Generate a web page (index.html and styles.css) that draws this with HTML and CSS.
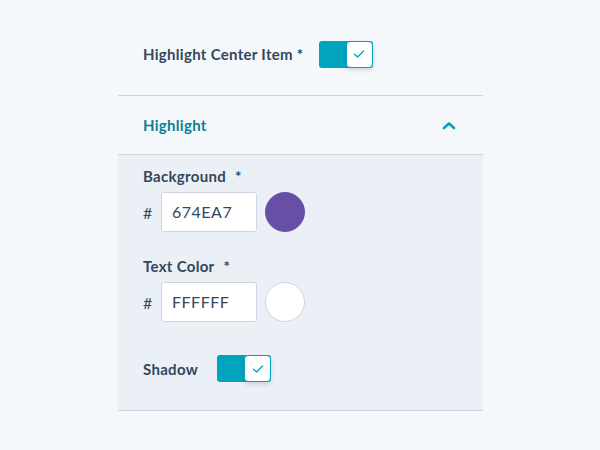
FILE: index.html
```html
<!DOCTYPE html>
<html>
<head>
<meta charset="utf-8">
<link rel="stylesheet" href="styles.css">
</head>
<body>
<div class="wrap">
  <div class="top-row">
    <span class="label">Highlight Center Item *</span>
    <span class="toggle"><span class="knob"><svg width="12" height="10" viewBox="0 0 12 10"><path d="M1.5 5.2 L4.6 8 L10.5 2" fill="none" stroke="#00a4bd" stroke-width="1.3" stroke-linecap="round" stroke-linejoin="round"/></svg></span></span>
  </div>
  <div class="panel">
    <div class="panel-head">
      <span class="head-title">Highlight</span>
      <svg class="chev" width="14" height="9" viewBox="0 0 14 9"><path d="M2 7 L7 2.5 L12 7" fill="none" stroke="#00a4bd" stroke-width="2.6" stroke-linecap="round" stroke-linejoin="round"/></svg>
    </div>
    <div class="panel-body">
      <div class="field">
        <div class="label">Background<span class="req">*</span></div>
        <div class="color-row">
          <span class="hash">#</span>
          <div class="input">674EA7</div>
          <span class="swatch purple"></span>
        </div>
      </div>
      <div class="field">
        <div class="label">Text Color<span class="req">*</span></div>
        <div class="color-row">
          <span class="hash">#</span>
          <div class="input">FFFFFF</div>
          <span class="swatch white"></span>
        </div>
      </div>
      <div class="shadow-row">
        <span class="label">Shadow</span>
        <span class="toggle"><span class="knob"><svg width="12" height="10" viewBox="0 0 12 10"><path d="M1.5 5.2 L4.6 8 L10.5 2" fill="none" stroke="#00a4bd" stroke-width="1.3" stroke-linecap="round" stroke-linejoin="round"/></svg></span></span>
      </div>
    </div>
  </div>
</div>
</body>
</html>
```

FILE: styles.css
```css
html, body {
  margin: 0;
  padding: 0;
  background: #f5f8fa;
  font-family: Lato, "Noto Sans", sans-serif;
  color: #33475b;
}
.wrap {
  width: 365px;
  margin-left: 118px;
  padding-top: 40px;
}
.top-row {
  display: flex;
  align-items: center;
  padding-left: 25px;
  height: 28px;
}
.label {
  font-size: 15px;
  font-weight: 700;
  line-height: 20px;
  color: #33475b;
  letter-spacing: 0.3px;
}
.top-row .label { margin-right: 15px; }
.req { margin-left: 9px; }
.toggle {
  display: inline-flex;
  justify-content: flex-end;
  width: 54px;
  height: 27px;
  background: #00a4bd;
  border-radius: 3px;
  box-sizing: border-box;
}
.knob {
  width: 27px;
  height: 27px;
  box-sizing: border-box;
  background: #fff;
  border: 1px solid #00a4bd;
  border-radius: 4px;
  display: flex;
  align-items: center;
  justify-content: center;
  box-shadow: 0 2px 4px rgba(45, 62, 80, 0.18);
}
.panel {
  margin-top: 27px;
  border-top: 1px solid #cbd6e2;
  border-bottom: 1px solid #cbd6e2;
}
.panel-head {
  height: 58px;
  border-bottom: 1px solid #cbd6e2;
  display: flex;
  align-items: center;
  justify-content: space-between;
  padding: 0 27px 0 25px;
  background: #f5f8fa;
}
.head-title {
  font-size: 15px;
  font-weight: 700;
  color: #0a7f93;
  letter-spacing: 0.3px;
}
.panel-body {
  background: #eaf0f6;
  padding: 11px 25px 28px;
}
.field { margin-bottom: 24px; }
.field .label { margin-bottom: 6px; }
.color-row {
  display: flex;
  align-items: center;
}
.hash {
  font-size: 16px;
  width: 18px;
  color: #33475b;
}
.input {
  width: 96px;
  height: 40px;
  box-sizing: border-box;
  background: #fff;
  border: 1px solid #cbd6e2;
  border-radius: 3px;
  padding: 0 10px;
  font-size: 16px;
  line-height: 38px;
  color: #33475b;
  letter-spacing: 0.5px;
}
.swatch {
  width: 40px;
  height: 40px;
  border-radius: 50%;
  margin-left: 8px;
  box-sizing: border-box;
}
.purple { background: #674ea7; border: 1px solid #6a55a8; }
.white { background: #fff; border: 1px solid #cbd6e2; }
.shadow-row {
  display: flex;
  align-items: center;
  margin-top: 33px;
}
.shadow-row .label { margin-right: 19px; }
```
